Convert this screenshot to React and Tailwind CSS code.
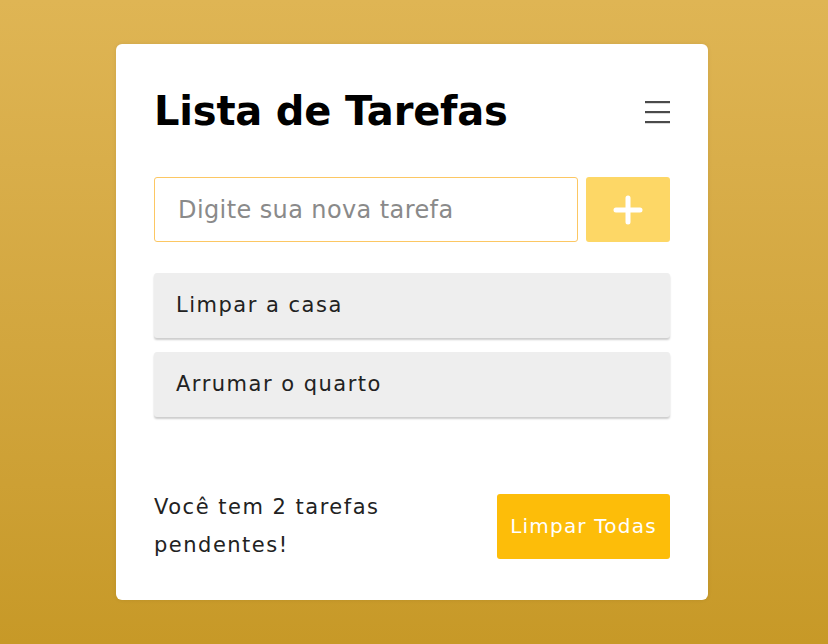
import React from "react";

export default function App() {
  const font = { fontFamily: "'DejaVu Sans', 'Noto Sans', sans-serif" };
  return (
    <div
      className="w-full h-[644px] flex items-center justify-center pr-[4px] bg-gradient-to-b from-[#dfb554] to-[#c79927]"
      style={font}
    >
      <div className="w-[592px] h-[556px] bg-white rounded-[6px] px-[38px] pt-[43px] flex flex-col shadow-[0_0_4px_rgba(0,0,0,0.08)]">
        <div className="flex items-center justify-between h-[48px]">
          <h1 className="text-[40px] leading-[48px] font-bold text-black tracking-[-0.2px]">Lista de Tarefas</h1>
          <svg width="25" height="24" viewBox="0 0 25 24" className="mt-[2px]">
            <rect x="0" y="1" width="25" height="2.2" fill="#4a4a4a" />
            <rect x="0" y="11" width="25" height="2.2" fill="#4a4a4a" />
            <rect x="0" y="21" width="25" height="2.2" fill="#4a4a4a" />
          </svg>
        </div>
        <div className="flex gap-[8px] mt-[42px]">
          <div className="flex-1 h-[65px] border border-[#fcc763] rounded-[3px] flex items-center px-[23px]">
            <span className="text-[24px] text-[#8a8a8a] tracking-[0.4px]">Digite sua nova tarefa</span>
          </div>
          <button className="w-[84px] h-[65px] bg-[#fdd766] rounded-[3px] flex items-center justify-center">
            <svg width="30" height="30" viewBox="0 0 30 30">
              <path d="M15 3v24M3 15h24" stroke="white" strokeWidth="5" strokeLinecap="round" />
            </svg>
          </button>
        </div>
        <div className="flex flex-col gap-[14px] mt-[31px]">
          <div className="h-[65px] bg-[#eeeeee] rounded-[3px] shadow-[0_2px_2px_rgba(0,0,0,0.2)] flex items-center px-[22px]">
            <span className="text-[21px] text-[#222] tracking-[1.5px]">Limpar a casa</span>
          </div>
          <div className="h-[65px] bg-[#eeeeee] rounded-[3px] shadow-[0_2px_2px_rgba(0,0,0,0.2)] flex items-center px-[22px]">
            <span className="text-[21px] text-[#222] tracking-[1.5px]">Arrumar o quarto</span>
          </div>
        </div>
        <div className="flex items-center justify-between mt-[71px]">
          <p className="text-[21px] leading-[38px] text-[#222] w-[280px] tracking-[1.5px]">Você tem 2 tarefas pendentes!</p>
          <button className="w-[173px] h-[65px] bg-[#fdbd09] rounded-[3px] text-white text-[20px] tracking-[1.2px]">
            Limpar Todas
          </button>
        </div>
      </div>
    </div>
  );
}
